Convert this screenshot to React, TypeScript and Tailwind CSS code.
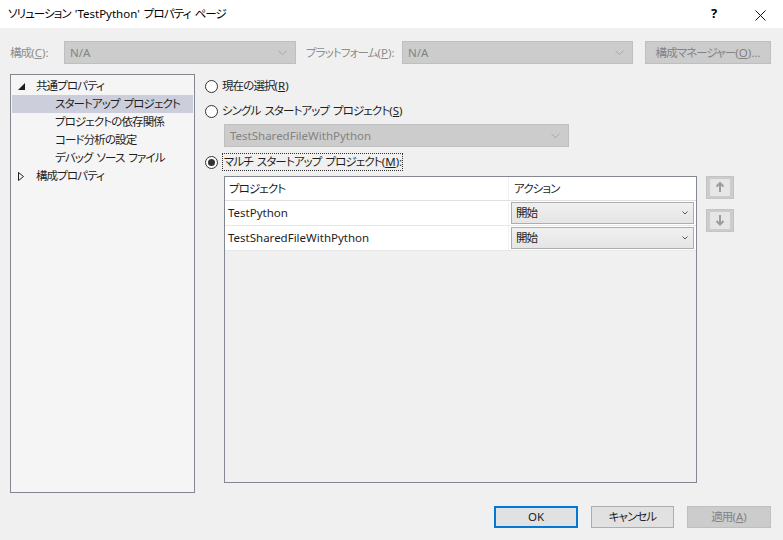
import React from "react";

const font = { fontFamily: '"Noto Sans", "Noto Sans CJK JP", sans-serif' };

function J({ t }: { t: string }) {
  const parts = t.split(" ");
  return (
    <>
      {parts.map((p, i) => (
        <React.Fragment key={i}>
          {i > 0 && <span className="inline-block w-[4px]" />}
          {p}
        </React.Fragment>
      ))}
    </>
  );
}

function L({ children }: { children: React.ReactNode }) {
  return <span className="tracking-[0px]">{children}</span>;
}

function Key({ k }: { k: string }) {
  return (
    <span className="tracking-[0px]">
      (<span className="underline">{k}</span>)
    </span>
  );
}

function Chevron({ color = "#9a9a9a" }: { color?: string }) {
  return (
    <svg width="9" height="6" viewBox="0 0 9 6">
      <path d="M0.5 0.8 L4.5 4.6 L8.5 0.8" fill="none" stroke={color} strokeWidth="1" />
    </svg>
  );
}

function DisabledCombo({ text, className }: { text: string; className: string }) {
  return (
    <div className={`flex items-center justify-between bg-[#cccccc] border border-[#bfbfbf] pl-[5px] pr-[8px] shrink-0 ${className}`}>
      <span className="text-[#838383] tracking-[0px]">{text}</span>
      <Chevron color="#a6a6a6" />
    </div>
  );
}

function Radio({ checked }: { checked?: boolean }) {
  return (
    <span className="w-[13px] h-[13px] rounded-full border border-[#333333] bg-white flex items-center justify-center shrink-0">
      {checked && <span className="w-[7px] h-[7px] rounded-full bg-[#333333]" />}
    </span>
  );
}

function ActionCombo() {
  return (
    <div className="mx-[2px] h-[22px] flex items-center justify-between border border-[#adadad] bg-gradient-to-b from-[#f0f0f0] to-[#e5e5e5] pl-[4px] pr-[5px]">
      <span>開始</span>
      <svg width="6" height="4" viewBox="0 0 6 4">
        <path d="M0.5 0.5 L3 3 L5.5 0.5" fill="none" stroke="#555555" strokeWidth="1" />
      </svg>
    </div>
  );
}

function ArrowBtn({ up }: { up?: boolean }) {
  return (
    <div className="w-[28px] h-[23px] bg-[#cccccc] border border-[#c4c4c4] flex items-center justify-center">
      <div className="w-[20px] h-[17px] bg-[#e6e6e6] flex items-center justify-center">
        <svg width="10" height="11" viewBox="0 0 10 11">
          {up ? (
            <path d="M5 1 L5 10 M1.5 4.5 L5 1 L8.5 4.5" fill="none" stroke="#9c9c9c" strokeWidth="2" />
          ) : (
            <path d="M5 0 L5 9.5 M1.5 6 L5 9.5 L8.5 6" fill="none" stroke="#9c9c9c" strokeWidth="2" />
          )}
        </svg>
      </div>
    </div>
  );
}

export default function App() {
  const treeChildren = ["プロジェクトの依存関係", "コード分析の設定", "デバッグ ソース ファイル"];
  return (
    <div
      className="w-[783px] h-[540px] bg-[#f0f0f0] flex flex-col text-[11.5px] tracking-[-0.9px] text-[#1e1e1e] overflow-hidden whitespace-nowrap [font-feature-settings:'palt']"
      style={font}
    >
      {/* Title bar */}
      <div className="h-[28px] bg-white flex items-center pl-[8px] shrink-0">
        <span className="flex-1 text-black">
          ソリューション<span className="inline-block w-[4px]" />
          <L>'TestPython'</L>
          <span className="inline-block w-[4px]" />
          <J t="プロパティ ページ" />
        </span>
        <span className="w-[46px] text-center text-[13px] font-bold text-black tracking-[0px]">?</span>
        <span className="w-[46px] text-center text-black">
          <svg width="11" height="11" viewBox="0 0 11 11" className="inline-block">
            <path d="M0.5 0.5 L10.5 10.5 M10.5 0.5 L0.5 10.5" stroke="#111" strokeWidth="1" />
          </svg>
        </span>
      </div>

      {/* Config row */}
      <div className="mt-[13px] h-[23px] flex items-center pl-[10px] shrink-0">
        <span className="w-[54px] text-[#8d8d8d]">
          構成<Key k="C" />:
        </span>
        <DisabledCombo text="N/A" className="w-[232px] h-[23px]" />
        <span className="ml-[10px] w-[96px] text-[#8d8d8d]">
          プラットフォーム<Key k="P" />:
        </span>
        <DisabledCombo text="N/A" className="w-[231px] h-[23px]" />
        <div className="ml-[12px] w-[126px] h-[23px] bg-[#cccccc] border border-[#bfbfbf] flex items-center justify-center text-[#838383]">
          構成マネージャー<Key k="O" />
          <L>...</L>
        </div>
      </div>

      {/* Main */}
      <div className="mt-[10px] flex pl-[10px] shrink-0">
        <div className="w-[185px] h-[419px] border border-[#828790] bg-[#f5f5f5] pt-[2px] px-[1px] shrink-0">
          <div className="h-[18px] flex items-center">
            <span className="w-[19px] flex justify-end pr-[6px]">
              <svg width="7" height="7" viewBox="0 0 7 7">
                <path d="M7 0 L7 7 L0 7 Z" fill="#1e1e1e" />
              </svg>
            </span>
            <span className="ml-[5px]">共通プロパティ</span>
          </div>
          <div className="h-[18px] flex items-center bg-[#cccedb] pl-[43px]">
            <J t="スタートアップ プロジェクト" />
          </div>
          {treeChildren.map((t) => (
            <div key={t} className="h-[18px] flex items-center pl-[43px]">
              <J t={t} />
            </div>
          ))}
          <div className="h-[18px] flex items-center">
            <span className="w-[19px] flex justify-end pr-[7px]">
              <svg width="6" height="9" viewBox="0 0 6 9">
                <path d="M0.5 0.5 L5.5 4.5 L0.5 8.5 Z" fill="none" stroke="#1e1e1e" strokeWidth="1" />
              </svg>
            </span>
            <span className="ml-[5px]">構成プロパティ</span>
          </div>
        </div>

        <div className="ml-[10px] flex flex-col">
          <div className="h-[22px] flex items-center gap-[4px] mt-[1px]">
            <Radio />
            <span>
              現在の選択<Key k="R" />
            </span>
          </div>
          <div className="h-[22px] mt-[3px] flex items-center gap-[4px]">
            <Radio />
            <span>
              <J t="シングル スタートアップ プロジェクト" />
              <Key k="S" />
            </span>
          </div>
          <DisabledCombo text="TestSharedFileWithPython" className="ml-[19px] w-[345px] h-[23px] mt-[2px]" />
          <div className="h-[22px] mt-[4px] flex items-center gap-[4px]">
            <Radio checked />
            <span className="border border-dotted border-[#333] px-[1px] leading-[16px]">
              <J t="マルチ スタートアップ プロジェクト" />
              <Key k="M" />:
            </span>
          </div>
          <div className="flex mt-[3px] ml-[19px] gap-[9px]">
            <div className="w-[473px] h-[307px] border border-[#828790] bg-[#f0f0f0] flex flex-col">
              <div className="h-[24px] flex bg-white border-b border-[#e0e0e0]">
                <div className="w-[284px] flex items-center pl-[4px] border-r border-[#f0f0f0]">プロジェクト</div>
                <div className="flex-1 flex items-center pl-[5px]">アクション</div>
              </div>
              {["TestPython", "TestSharedFileWithPython"].map((p) => (
                <div key={p} className="h-[25px] flex bg-white border-b border-[#e8e8e8]">
                  <div className="w-[284px] flex items-center pl-[3px] border-r border-[#f0f0f0] tracking-[0px]">{p}</div>
                  <div className="flex-1 flex flex-col justify-center">
                    <ActionCombo />
                  </div>
                </div>
              ))}
            </div>
            <div className="flex flex-col gap-[10px]">
              <ArrowBtn up />
              <ArrowBtn />
            </div>
          </div>
        </div>
      </div>

      {/* Buttons */}
      <div className="mt-[13px] flex justify-end pr-[12px] gap-[13px]">
        <div className="w-[84px] h-[22px] border-2 border-[#0078d7] bg-[#e1e1e1] flex items-center justify-center tracking-[0px]">OK</div>
        <div className="w-[83px] h-[22px] border border-[#adadad] bg-[#e1e1e1] flex items-center justify-center">キャンセル</div>
        <div className="w-[84px] h-[22px] border border-[#bfbfbf] bg-[#cccccc] flex items-center justify-center text-[#838383]">
          適用<Key k="A" />
        </div>
      </div>
    </div>
  );
}
